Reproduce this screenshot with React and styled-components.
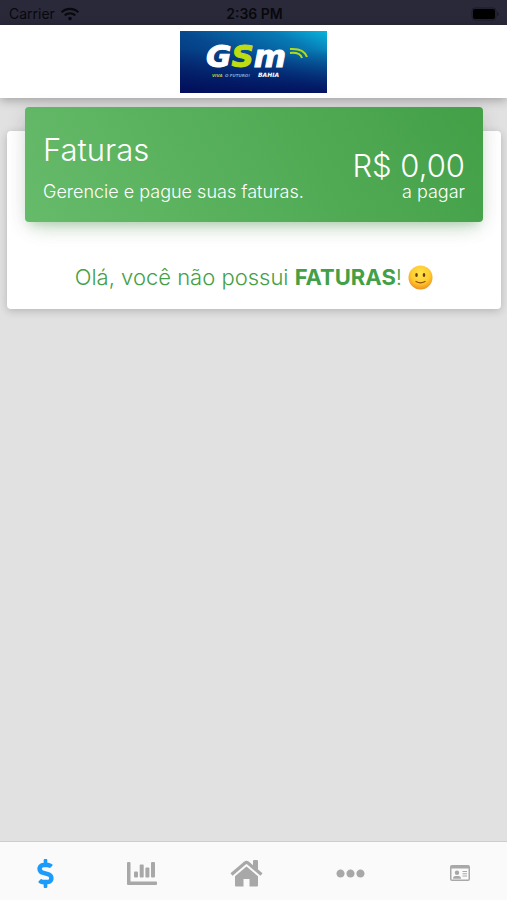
import styled, { createGlobalStyle } from "styled-components";
import { FaDollarSign, FaEllipsisH, FaWifi } from "react-icons/fa";

const tabs = [
  { label: "Faturas", icon: <FaDollarSign size={29} />, active: true },
  { label: "Consumo", icon: <ChartIcon /> },
  { label: "Início", icon: <HomeIcon /> },
  { label: "Mais", icon: <FaEllipsisH size={29} /> },
  { label: "Perfil", icon: <CardIcon /> },
];

export default function App() {
  return (
    <Page>
      <GlobalStyle />
      <StatusBar>
        <Carrier>
          Carrier <FaWifi size={18} aria-hidden="true" />
        </Carrier>
        <Clock>2:36 PM</Clock>
        <BatterySlot>
          <Battery />
        </BatterySlot>
      </StatusBar>
      <Header>
        <Logo />
      </Header>
      <Main>
        <Card>
          <Banner>
            <div>
              <Title>Faturas</Title>
              <Subtitle>Gerencie e pague suas faturas.</Subtitle>
            </div>
            <Total>
              <Amount>R$ 0,00</Amount>
              <Subtitle>a pagar</Subtitle>
            </Total>
          </Banner>
          <Message>
            Olá, você não possui <strong>FATURAS</strong>! <Smile />
          </Message>
        </Card>
      </Main>
      <TabBar>
        {tabs.map(({ label, icon, active }) => (
          <Tab
            key={label}
            type="button"
            aria-label={label}
            aria-current={active ? "page" : undefined}
            $active={active}
          >
            {icon}
          </Tab>
        ))}
      </TabBar>
    </Page>
  );
}

function Logo() {
  return (
    <LogoImage viewBox="0 0 147 62" role="img" aria-label="GSM Bahia">
      <defs>
        <linearGradient id="sky" x1="0" y1="1" x2="1" y2="0">
          <stop offset="0" stopColor="#04246a" />
          <stop offset="0.5" stopColor="#06498f" />
          <stop offset="0.8" stopColor="#0779b4" />
          <stop offset="1" stopColor="#08b4dc" />
        </linearGradient>
        <linearGradient id="shade" x1="0" y1="0" x2="0" y2="1">
          <stop offset="0.3" stopColor="#020a58" stopOpacity="0" />
          <stop offset="1" stopColor="#020a58" stopOpacity="0.85" />
        </linearGradient>
      </defs>
      <rect width="147" height="62" fill="url(#sky)" />
      <rect width="147" height="62" fill="url(#shade)" />
      <LogoText x="26" y="36" $size={31} stroke="#ffffff">
        G
        <tspan fill="#bfdc12" stroke="#bfdc12">
          S
        </tspan>
        m
      </LogoText>
      <LogoText x="78" y="46" $size={6}>
        BAHIA
      </LogoText>
      <LogoText x="32" y="46" $size={4} fill="#b9cf3a">
        VIVA
      </LogoText>
      <LogoText x="45" y="46" $size={4} fill="#7ea0cf">
        O FUTURO!
      </LogoText>
      <g fill="none" stroke="#b4d91c" strokeWidth="2">
        <path d="M110 18q14-1 17 8" />
        <path d="M110 22q10-1 12 5" />
      </g>
    </LogoImage>
  );
}

function Battery() {
  return (
    <svg width="29" height="14" viewBox="0 0 29 14" aria-label="Bateria">
      <rect x="1" y="1" width="24" height="12" rx="3" fill="none" stroke="#1b1b29" />
      <rect x="2" y="2" width="22" height="10" rx="2" fill="#000" />
      <path d="M26 5q2 0 2 2t-2 2z" fill="#1b1b29" />
    </svg>
  );
}

function Smile() {
  return (
    <Emoji viewBox="0 0 25 25" role="img" aria-label="🙂">
      <defs>
        <radialGradient id="face" cx="0.5" cy="0.35" r="0.65">
          <stop offset="0" stopColor="#ffe44d" />
          <stop offset="0.6" stopColor="#ffcb2e" />
          <stop offset="1" stopColor="#f0901c" />
        </radialGradient>
      </defs>
      <circle cx="12.5" cy="12.5" r="12" fill="url(#face)" />
      <ellipse cx="8.5" cy="10" rx="1.3" ry="2" fill="#643a0b" />
      <ellipse cx="16" cy="10" rx="1.3" ry="2" fill="#643a0b" />
      <path
        d="M8 16.5q4.500 2.600 9 0"
        fill="none"
        stroke="#8a4c0c"
        strokeWidth="1.2"
        strokeLinecap="round"
      />
    </Emoji>
  );
}

function ChartIcon() {
  return (
    <svg width="30" height="23" viewBox="0 0 30 23" fill="currentColor">
      <path d="M1 0h1.500q1 0 1 1v18.500H29q1 0 1 1V22q0 1-1 1H1q-1 0-1-1V1q0-1 1-1z" />
      <rect x="7" y="9.500" width="4" height="6" rx="1" />
      <rect x="12.700" y="2.500" width="4" height="13" rx="1" />
      <rect x="18.400" y="5.500" width="4" height="10" rx="1" />
      <rect x="24" y="0" width="4" height="15.500" rx="1" />
    </svg>
  );
}

function HomeIcon() {
  return (
    <svg width="33" height="27" viewBox="0 0 33 27" fill="currentColor">
      <path d="M23 1q0-1 1-1h3q1 0 1 1v9l-5-4z" />
      <path
        d="M1.500 14.500 15 3q1.500-1.200 3 0l13.500 11.500"
        fill="none"
        stroke="currentColor"
        strokeWidth="3.2"
      />
      <path d="M16.500 6.500 28 16.300v9.200q0 1-1 1h-7.500V19h-6v7.500H6q-1 0-1-1v-9.200z" />
    </svg>
  );
}

function CardIcon() {
  return (
    <svg width="20" height="16" viewBox="0 0 20 16" fill="currentColor">
      <path
        fillRule="evenodd"
        d="M2 0h16q2 0 2 2v12q0 2-2 2H2q-2 0-2-2V2q0-2 2-2zM1.500 3.500v10.500q0 .5.5.5h16q.5 0 .5-.5V3.500z"
      />
      <circle cx="7" cy="7.800" r="2.200" />
      <path d="M3 13.800q0-2.800 2.500-2.800h3q2.500 0 2.500 2.800z" />
      <path d="M12.500 6H17v1h-4.500zM12.500 8.300H17v1h-4.500zM12.500 10.600H17v1h-4.500z" />
    </svg>
  );
}

const GlobalStyle = createGlobalStyle`
  * {
    box-sizing: border-box;
  }

  body {
    margin: 0;
    background: #e1e1e1;
    font-family: Inter, "Liberation Sans", sans-serif;
    font-weight: 300;
  }
`;

const Page = styled.div`
  display: flex;
  flex-direction: column;
  min-height: 100vh;
`;

const StatusBar = styled.div`
  display: grid;
  grid-template-columns: 1fr auto 1fr;
  align-items: center;
  height: 25px;
  padding: 2px 7px 0 9px;
  background: #29293a;
  color: #08080d;
  font-size: 14px;
  font-weight: 400;
`;

const Carrier = styled.span`
  display: flex;
  align-items: center;
  gap: 6px;
`;

const Clock = styled.span`
  font-weight: 600;
`;

const BatterySlot = styled.span`
  display: flex;
  justify-content: flex-end;
`;

const Header = styled.header`
  display: flex;
  justify-content: center;
  padding: 6px 6px 5px;
  background: #ffffff;
  box-shadow: 0 2px 10px rgba(0, 0, 0, 0.3);
`;

const LogoImage = styled.svg`
  display: block;
  width: 147px;
  height: 62px;
`;

const LogoText = styled.text`
  font-family: "DejaVu Sans", sans-serif;
  font-size: ${({ $size }) => $size}px;
  font-weight: 700;
  font-style: italic;
  fill: ${({ fill }) => fill || "#ffffff"};
`;

const Main = styled.main`
  flex: 1;
  padding: 33px 6px 24px 7px;
`;

const Card = styled.section`
  display: flex;
  flex-direction: column;
  padding: 0 18px 18px;
  border-radius: 4px;
  background: #ffffff;
  box-shadow: 0 2px 8px rgba(0, 0, 0, 0.2);
`;

const Banner = styled.div`
  display: flex;
  justify-content: space-between;
  align-items: flex-end;
  margin-top: -24px;
  padding: 25px 18px 18px;
  border-radius: 4px;
  background: linear-gradient(60deg, #66bb6a, #43a047);
  color: #ffffff;
  box-shadow: 0 12px 20px -10px rgba(76, 175, 80, 0.28),
    0 4px 20px rgba(0, 0, 0, 0.12), 0 7px 8px -5px rgba(76, 175, 80, 0.2);
`;

const Title = styled.h1`
  margin: 0 0 12px;
  font-size: 31px;
  font-weight: 300;
  line-height: 36px;
`;

const Subtitle = styled.p`
  margin: 0;
  font-size: 18px;
  line-height: 24px;
`;

const Total = styled.div`
  text-align: right;
`;

const Amount = styled.div`
  font-size: 31px;
  line-height: 28px;
`;

const Message = styled.p`
  margin: 41px 0 0;
  color: #43a047;
  font-size: 22px;
  line-height: 28px;
  text-align: center;

  strong {
    font-weight: 700;
  }
`;

const Emoji = styled.svg`
  width: 25px;
  height: 25px;
  vertical-align: text-bottom;
`;

const TabBar = styled.nav`
  display: flex;
  justify-content: space-between;
  align-items: center;
  position: sticky;
  bottom: 0;
  height: 59px;
  padding: 4px 37px 0;
  border-top: 1px solid #cccccc;
  background: #fafafa;
`;

const Tab = styled.button`
  display: flex;
  justify-content: center;
  align-items: center;
  height: 48px;
  padding: 0;
  border: 0;
  background: none;
  color: ${({ $active }) => ($active ? "#1b9cfb" : "#a8a8a8")};
  cursor: pointer;

  &:first-child {
    width: 17px;
  }

  &:last-child {
    margin-left: 12px;
  }

  svg {
    flex-shrink: 0;
  }
`;
